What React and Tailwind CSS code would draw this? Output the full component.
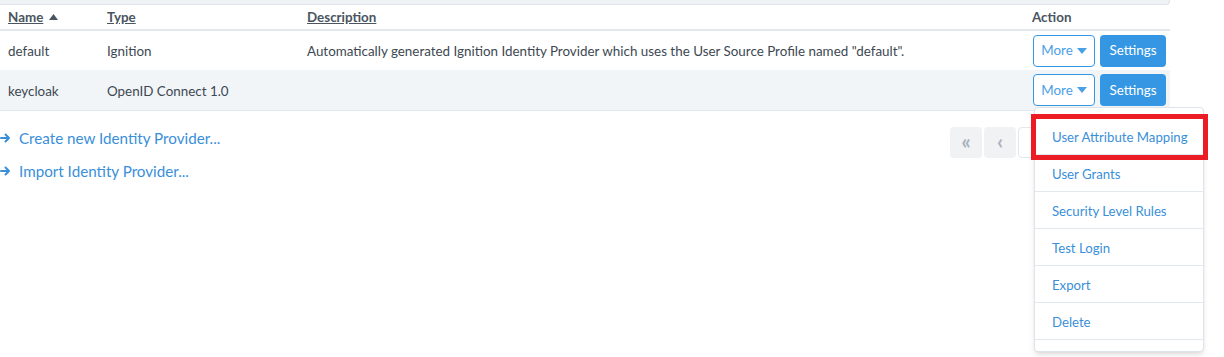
import React from 'react'

const rows = [
  {
    name: 'default',
    type: 'Ignition',
    description:
      'Automatically generated Ignition Identity Provider which uses the User Source Profile named "default".',
    bg: 'bg-white'
  },
  { name: 'keycloak', type: 'OpenID Connect 1.0', description: '', bg: 'bg-[#f2f5f8]' }
]

const menuItems = [
  'User Attribute Mapping',
  'User Grants',
  'Security Level Rules',
  'Test Login',
  'Export',
  'Delete'
]

function Caret() {
  return (
    <svg width="10" height="6" viewBox="0 0 10 6" className="inline-block ml-1">
      <path d="M0 0 L10 0 L5 6 Z" fill="currentColor" />
    </svg>
  )
}

function Arrow() {
  return (
    <svg width="11" height="10" viewBox="0 0 11 10" className="mr-[8px]">
      <path
        d="M1 5 H9 M5.5 1.5 L9 5 L5.5 8.5"
        stroke="currentColor"
        strokeWidth="2"
        fill="none"
        strokeLinecap="round"
        strokeLinejoin="round"
      />
    </svg>
  )
}

function App() {
  return (
    <div className="relative w-[1224px] h-[357px] bg-white text-[#3d4852] font-['Lato',sans-serif] text-[13.4px] overflow-hidden">
      <div className="w-[1170px]">
        {/* tail of the panel above */}
        <div className="h-[5px] bg-[#f0f3f6] border-b border-r border-[#dfe4ea] rounded-br" />

        <table className="w-full table-fixed border-collapse">
          <colgroup>
            <col className="w-[99px]" />
            <col className="w-[200px]" />
            <col className="w-[726px]" />
            <col className="w-[145px]" />
          </colgroup>
          <thead>
            <tr className="h-[25px] border-b-2 border-[#e3e8ed] text-[#4a5561] font-bold">
              <th className="text-left pl-2 font-bold">
                <span className="underline">Name</span>
                <svg width="9" height="6" viewBox="0 0 9 6" className="inline-block ml-[6px] mb-[3px]">
                  <path d="M0 6 L4.5 0 L9 6 Z" fill="#4a5561" />
                </svg>
              </th>
              <th className="text-left pl-2 font-bold">
                <span className="underline">Type</span>
              </th>
              <th className="text-left pl-2 font-bold">
                <span className="underline">Description</span>
              </th>
              <th className="text-left pl-[7px] font-bold">Action</th>
            </tr>
          </thead>
          <tbody>
            {rows.map((r) => (
              <tr key={r.name} className={`h-[40px] ${r.bg}`}>
                <td className="pl-2 pt-[2px]">{r.name}</td>
                <td className="pl-2 pt-[2px]">{r.type}</td>
                <td className="pl-2 pt-[2px] whitespace-nowrap">{r.description}</td>
                <td className="pl-2">
                  <div className="flex gap-[5px]">
                    <button className="w-[62px] h-[32px] border border-[#3597e3] rounded bg-white text-[#4aa0e6] flex items-center justify-center">
                      More
                      <Caret />
                    </button>
                    <button className="w-[66px] h-[32px] rounded bg-[#3597e3] text-white">
                      Settings
                    </button>
                  </div>
                </td>
              </tr>
            ))}
          </tbody>
        </table>
        <div className="border-b border-[#e3e8ed]" />
      </div>

      <div className="flex w-[1170px] pt-[16px]">
        <div className="flex flex-col gap-[11px] text-[15.2px] text-[#3a8fd9]">
          <div className="flex items-center h-[22px]">
            <Arrow />
            Create new Identity Provider...
          </div>
          <div className="flex items-center h-[22px]">
            <Arrow />
            Import Identity Provider...
          </div>
        </div>
        <div className="ml-auto flex gap-[2px]">
          <div className="w-[32px] h-[31px] rounded bg-[#f0f2f4] text-[#a9b3bd] flex items-center justify-center text-[21px] font-bold pb-[3px]">
            «
          </div>
          <div className="w-[32px] h-[31px] rounded bg-[#f0f2f4] text-[#a9b3bd] flex items-center justify-center text-[21px] font-bold pb-[3px]">
            ‹
          </div>
          <div className="w-[32px] h-[31px] rounded border border-[#e3e8ed] bg-white mr-[120px]" />
        </div>
      </div>

      {/* open dropdown */}
      <div className="absolute left-[1034px] top-[107px] w-[170px] h-[245px] bg-white border border-[#dfe4ea] rounded shadow-md pt-[10px] text-[13.2px]">
        {menuItems.map((item) => (
          <div
            key={item}
            className="h-[37px] border-b border-[#e3e8ed] pl-[17px] pt-[3px] flex items-center text-[#3a8fd9]"
          >
            {item}
          </div>
        ))}
      </div>

      {/* highlight */}
      <div className="absolute left-[1031px] top-[114px] w-[177px] h-[46px] border-[5px] border-[#ec1c24]" />
    </div>
  )
}

export default App
